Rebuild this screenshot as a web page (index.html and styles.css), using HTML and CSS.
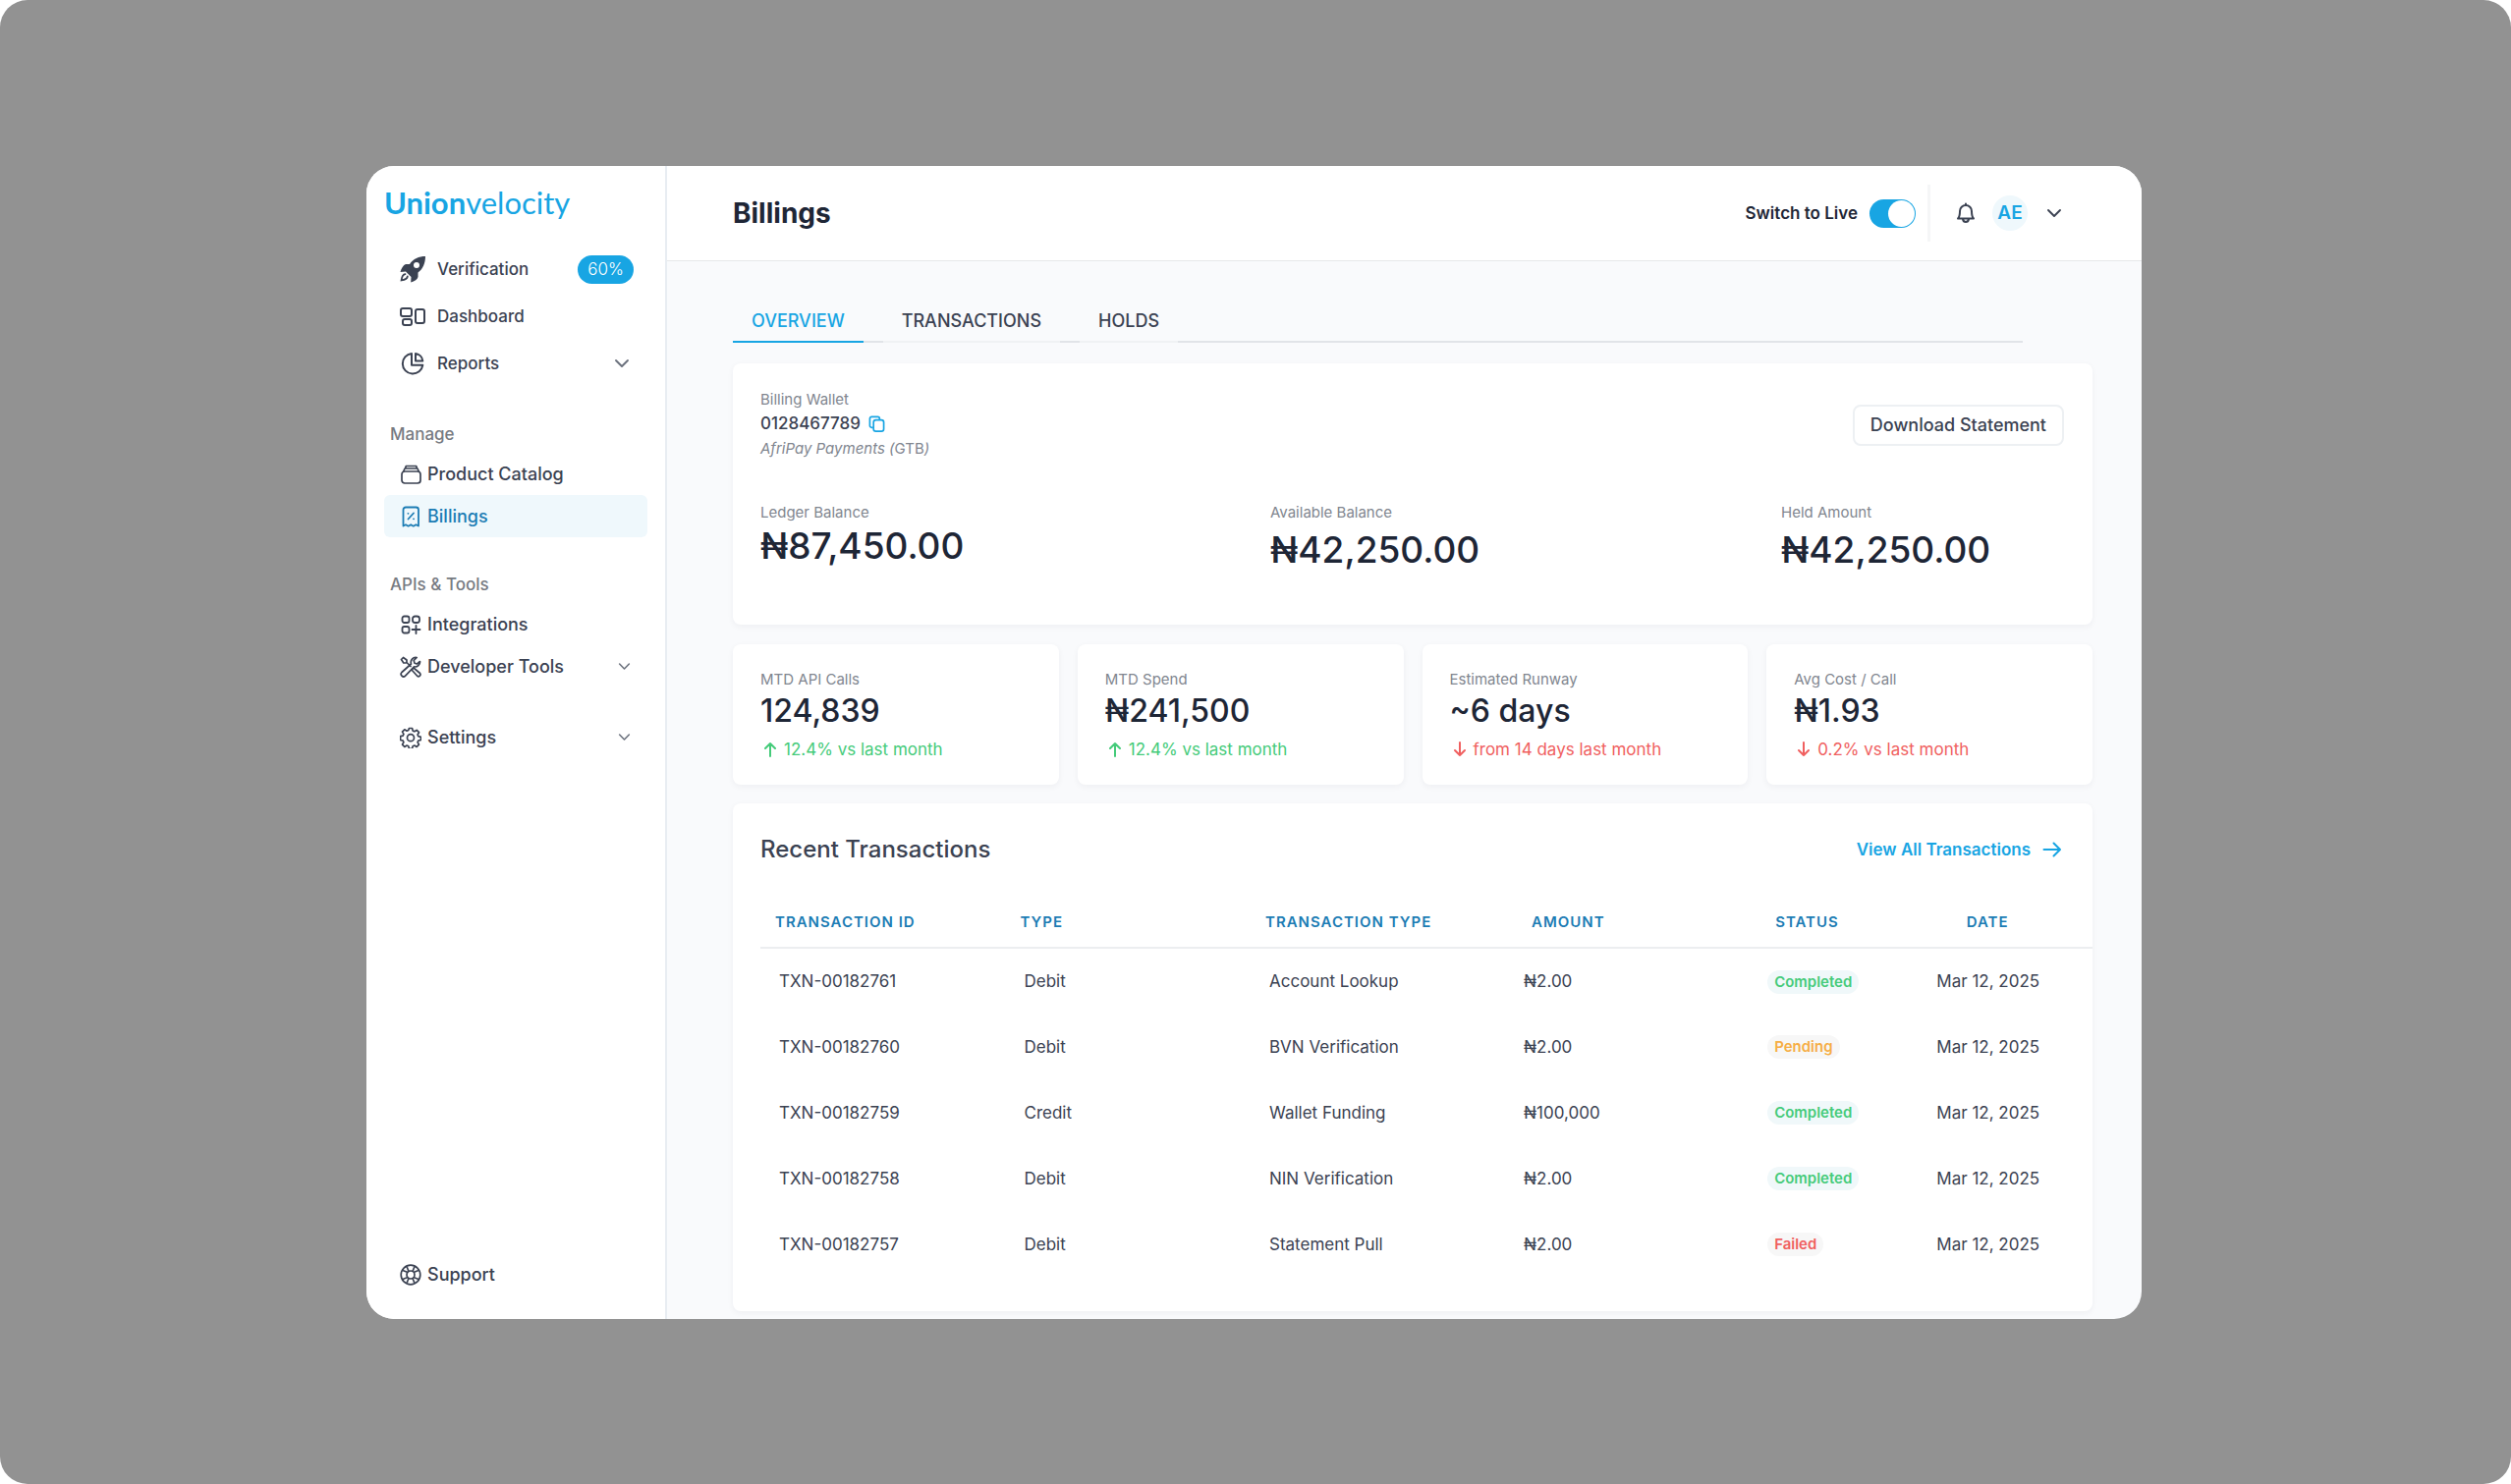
FILE: index.html
```html
<!DOCTYPE html>
<html lang="en">
<head>
<meta charset="utf-8">
<meta name="viewport" content="width=device-width, initial-scale=1">
<title>Billings - Unionvelocity</title>
<link rel="stylesheet" href="styles.css">
</head>
<body>
<svg class="sprite" aria-hidden="true">
  <symbol id="chevron" viewBox="0 0 16 16"><path d="M2 5l6 6 6-6" fill="none" stroke="currentColor" stroke-width="1.900" stroke-linecap="round" stroke-linejoin="round"/></symbol>
  <symbol id="up" viewBox="0 0 16 16"><path d="M8 15V2M3 7l5-5 5 5" fill="none" stroke="currentColor" stroke-width="2" stroke-linecap="round" stroke-linejoin="round"/></symbol>
  <symbol id="down" viewBox="0 0 16 16"><path d="M8 1v13M3 9l5 5 5-5" fill="none" stroke="currentColor" stroke-width="2" stroke-linecap="round" stroke-linejoin="round"/></symbol>
</svg>
<div class="stage">
  <div class="app">
    <aside class="sidebar">
      <a class="logo" href="#"><b>Union</b>velocity</a>
      <nav class="nav">
        <a class="link large" href="#">
          <svg class="icon" viewBox="0 0 28 28"><path fill="currentColor" d="M27 1C20.500 1 14.500 3.500 11 9H7C4.500 10 2.500 13 1.500 17l5.500-.500 5.500 5.500-.300 5.500c4-1 6.800-3 7.300-5.500v-4.500C24.500 14 27 8 27 1z"/><circle cx="18" cy="10" r="3" fill="#fff"/><path d="M6.500 19.200C3.500 19.500 3 22 2.600 25.400 6 25 8.400 24.300 8.800 21.500" fill="none" stroke="currentColor" stroke-width="1.800" stroke-linecap="round"/></svg>
          <span>Verification</span><span class="progress">60%</span>
        </a>
        <a class="link large" href="#">
          <svg class="icon" viewBox="0 0 28 28" fill="none" stroke="currentColor" stroke-width="2"><rect x="2" y="6" width="11" height="8" rx="2"/><rect x="4" y="17" width="9" height="6" rx="2"/><rect x="17" y="7" width="9" height="14" rx="2"/></svg>
          <span>Dashboard</span>
        </a>
        <a class="link large" href="#">
          <svg class="icon" viewBox="0 0 28 28" fill="none" stroke="currentColor" stroke-width="2" stroke-linejoin="round"><path d="M13 4a10.300 10.300 0 1 0 11.300 11.800H13z"/><path d="M17 4v7.500h7.300A8.500 8.500 0 0 0 17 4z"/></svg>
          <span>Reports</span><svg class="chevron wide"><use href="#chevron"/></svg>
        </a>
        <h2 class="group">Manage</h2>
        <a class="link" href="#">
          <svg class="icon" viewBox="0 0 22 22" fill="none" stroke="currentColor" stroke-width="1.700" stroke-linejoin="round"><rect x="2" y="8" width="19" height="12" rx="3"/><path d="M3.500 8.500L5 5h13l1.500 3.500M5.500 5l.800-2.500h10.400L17.500 5"/></svg>
          <span>Product Catalog</span>
        </a>
        <a class="link active" href="#" aria-current="page">
          <svg class="icon" viewBox="0 0 22 22" fill="none" stroke="currentColor" stroke-width="1.800" stroke-linejoin="round" stroke-linecap="round"><path d="M3.500 20.500V4A2.500 2.500 0 0 1 6 1.500h10.500A2.500 2.500 0 0 1 19 4v16.500l-2.600-1.300-2.600 1.500-2.600-1.500-2.600 1.500-2.600-1.500z"/><path d="M8.500 13.500l5.500-6M8.400 7.800h.1M14 13.300h.1"/></svg>
          <span>Billings</span>
        </a>
        <h2 class="group">APIs &amp; Tools</h2>
        <a class="link" href="#">
          <svg class="icon" viewBox="0 0 22 22" fill="none" stroke="currentColor" stroke-width="1.800" stroke-linecap="round"><rect x="2.500" y="2.500" width="7" height="6.500" rx="2"/><rect x="13" y="2.500" width="7" height="6.500" rx="2.500"/><rect x="2.500" y="13" width="7" height="6.500" rx="2"/><path d="M16.500 12v8M12.500 16h8"/></svg>
          <span>Integrations</span>
        </a>
        <a class="link" href="#">
          <svg class="icon" viewBox="0 0 22 22" fill="none" stroke="currentColor" stroke-width="1.700" stroke-linejoin="round" stroke-linecap="round"><path d="M1.500 3.500l2-2L7 4v2.500l4 4M6 7H3.800L1.500 3.500M12.500 13.500l1.500-1.500 6.500 5.500a2 2 0 0 1-2.800 2.800L12.500 14.500"/><path d="M20.500 5.500l-3 2.500-2.500-.800-.800-2.700 3-3a5 5 0 0 0-5.700 6.500L2 16.500a2.500 2.500 0 0 0 3.600 3.600l8.900-9.200a5 5 0 0 0 6-5.400z"/></svg>
          <span>Developer Tools</span><svg class="chevron"><use href="#chevron"/></svg>
        </a>
        <a class="link apart" href="#">
          <svg class="icon" viewBox="0 0 22 22" fill="none" stroke="currentColor" stroke-width="1.700" stroke-linejoin="round"><path d="M9.400 1.500h3.200l.600 2.600 1.700.7 2.300-1.400 2.300 2.300-1.400 2.300.7 1.700 2.600.6v3.200l-2.600.6-.7 1.700 1.400 2.300-2.300 2.300-2.300-1.400-1.700.7-.6 2.600H9.400l-.6-2.600-1.700-.7-2.300 1.400-2.300-2.300 1.400-2.300-.7-1.700-2.600-.6V9.700l2.600-.6.7-1.700-1.400-2.300 2.300-2.300 2.300 1.400 1.700-.7z"/><circle cx="11" cy="11.200" r="3.500"/></svg>
          <span>Settings</span><svg class="chevron"><use href="#chevron"/></svg>
        </a>
      </nav>
      <a class="link support" href="#">
        <svg class="icon" viewBox="0 0 22 22" fill="none" stroke="currentColor" stroke-width="1.700"><circle cx="11" cy="11" r="9.800"/><circle cx="11" cy="11" r="4"/><path d="M7 2.500l2 5M3 6.500l5 2M15 2.500l-2 5M19 6.500l-5 2M7 19.500l2-5M3 15.500l5-2M15 19.500l-2-5M19 15.500l-5-2"/></svg>
        <span>Support</span>
      </a>
    </aside>
    <div class="main">
      <header class="topbar">
        <h1>Billings</h1>
        <label class="live" for="live">Switch to Live <input class="toggle" id="live" type="checkbox" role="switch" checked></label>
        <div class="account">
          <button class="bare" type="button" aria-label="Notifications"><svg class="bell" viewBox="0 0 20 22" fill="none" stroke="currentColor" stroke-width="2" stroke-linejoin="round" stroke-linecap="round"><path d="M2 16.500h16c-1.600-1.500-2-3-2-7.500a6 6 0 0 0-12 0c0 4.500-.4 6-2 7.500zM10 1.500V3M7 17c.3 2 1.500 3 3 3s2.700-1 3-3"/></svg></button>
          <span class="avatar">AE</span>
          <button class="bare" type="button" aria-label="Account menu"><svg class="chevron wide"><use href="#chevron"/></svg></button>
        </div>
      </header>
      <main class="content">
        <nav class="tabs"><a class="tab current" href="#">OVERVIEW</a><a class="tab" href="#">TRANSACTIONS</a><a class="tab" href="#">HOLDS</a></nav>
        <section class="card wallet">
          <div class="wallet-head">
            <div>
              <p class="label">Billing Wallet</p>
              <p class="number">0128467789
                <button class="bare copy" type="button" aria-label="Copy account number"><svg viewBox="0 0 18 18" fill="none" stroke="currentColor" stroke-width="1.800"><rect x="5.500" y="5" width="11" height="12" rx="2.500"/><path d="M5 13H3.500a2 2 0 0 1-2-2V3.500a2 2 0 0 1 2-2H10a2 2 0 0 1 2 2V4.500"/></svg></button></p>
              <p class="label bank">AfriPay Payments (<span>GTB</span>)</p>
            </div>
            <button class="download" type="button">Download Statement</button>
          </div>
          <div class="balances">
            <div><p class="label">Ledger Balance</p><p class="balance first">₦87,450.00</p></div>
            <div><p class="label">Available Balance</p><p class="balance">₦42,250.00</p></div>
            <div><p class="label">Held Amount</p><p class="balance">₦42,250.00</p></div>
          </div>
        </section>
        <section class="stats">
          <div class="card stat"><p class="label">MTD API Calls</p><p class="value">124,839</p><p class="trend up"><svg><use href="#up"/></svg>12.4% vs last month</p></div>
          <div class="card stat"><p class="label">MTD Spend</p><p class="value">₦241,500</p><p class="trend up"><svg><use href="#up"/></svg>12.4% vs last month</p></div>
          <div class="card stat"><p class="label">Estimated Runway</p><p class="value">~6 days</p><p class="trend down"><svg><use href="#down"/></svg>from 14 days last month</p></div>
          <div class="card stat"><p class="label">Avg Cost / Call</p><p class="value">₦1.93</p><p class="trend down"><svg><use href="#down"/></svg>0.2% vs last month</p></div>
        </section>
        <section class="card recent">
          <div class="recent-head">
            <h2>Recent Transactions</h2>
            <a href="#">View All Transactions <svg viewBox="0 0 20 20" fill="none" stroke="currentColor" stroke-width="2" stroke-linecap="round" stroke-linejoin="round"><path d="M1.500 10h16M11.500 3.500l6.500 6.500-6.500 6.500"/></svg></a>
          </div>
          <table>
            <colgroup><col class="c-id"><col class="c-type"><col class="c-kind"><col class="c-amount"><col class="c-status"><col class="c-date"></colgroup>
            <thead><tr><th>TRANSACTION ID</th><th>TYPE</th><th>TRANSACTION TYPE</th><th class="inset">AMOUNT</th><th class="inset">STATUS</th><th class="centered">DATE</th></tr></thead>
            <tbody>
              <tr><td>TXN-00182761</td><td>Debit</td><td>Account Lookup</td><td>₦2.00</td><td><span class="pill ok">Completed</span></td><td>Mar 12, 2025</td></tr>
              <tr><td>TXN-00182760</td><td>Debit</td><td>BVN Verification</td><td>₦2.00</td><td><span class="pill wait">Pending</span></td><td>Mar 12, 2025</td></tr>
              <tr><td>TXN-00182759</td><td>Credit</td><td>Wallet Funding</td><td>₦100,000</td><td><span class="pill ok">Completed</span></td><td>Mar 12, 2025</td></tr>
              <tr><td>TXN-00182758</td><td>Debit</td><td>NIN Verification</td><td>₦2.00</td><td><span class="pill ok">Completed</span></td><td>Mar 12, 2025</td></tr>
              <tr><td>TXN-00182757</td><td>Debit</td><td>Statement Pull</td><td>₦2.00</td><td><span class="pill bad">Failed</span></td><td>Mar 12, 2025</td></tr>
            </tbody>
          </table>
        </section>
      </main>
    </div>
  </div>
</div>
</body>
</html>
```
FILE: styles.css
```css
:root {
  --blue: #18a5e3;
  --deep: #1c7cb4;
  --ink: #1e2636;
  --text: #3b4252;
  --muted: #81868f;
  --green: #45cb7a;
  --red: #f05f5f;
}
* { box-sizing: border-box; }
body { margin: 0; background: #fff; color: var(--text); font: 500 17px/24px Inter, "Noto Sans", sans-serif; }
h1, h2, p { margin: 0; font-weight: 500; }
a { color: inherit; text-decoration: none; }
button { font: inherit; color: inherit; cursor: pointer; }
.sprite { display: none; }
.bare { display: flex; padding: 0; border: 0; background: none; }

.stage { display: flex; min-height: 100vh; padding: 169px 376px 168px 373px; background: #929292; border-radius: 28px; }
.app { display: flex; flex: 1; min-width: 0; overflow: hidden; background: #f9fafc; border-radius: 28px; }

/* Sidebar */
.sidebar { display: flex; flex-direction: column; flex: none; width: 306px; padding: 0 18px 24px; background: #fff; border-right: 2px solid #e8edf2; }
.logo { height: 81px; padding-top: 17px; color: var(--blue); font: 400 31px/40px Lato, sans-serif; }
.link { display: flex; align-items: center; gap: 6px; height: 43px; padding: 0 17px 0 16px; border-radius: 6px; font-size: 18px; }
.link .icon { flex: none; width: 22px; height: 22px; }
.link.large { gap: 11px; height: 48px; padding: 0 14px 0 15px; font-size: 17px; }
.link.large .icon { width: 28px; height: 28px; }
.link.active { color: var(--deep); background: #eff8fc; }
.link.apart { margin-top: 29px; }
.support { margin-top: auto; }
.group { height: 38px; margin: 29px 0 0 6px; color: #777b82; font-size: 17px; line-height: 38px; }
.chevron { width: 13px; height: 13px; margin-left: auto; }
.chevron.wide { width: 16px; height: 16px; margin-right: 4px; }
.link .chevron { color: #6a707c; }
.progress { margin-left: auto; padding: 0 10px; border-radius: 15px; background: var(--blue); color: #fff; font-weight: 300; line-height: 29px; }

/* Top bar */
.main { flex: 1; min-width: 0; }
.topbar { display: flex; align-items: center; height: 97px; padding: 0 77px 0 67px; background: #fff; border-bottom: 1px solid #e6e8ea; }
.topbar h1 { color: var(--ink); font-size: 28px; line-height: 36px; font-weight: 700; }
.live { display: flex; align-items: center; gap: 12px; margin-left: auto; color: var(--ink); font-weight: 600; }
.toggle { appearance: none; display: flex; width: 47px; height: 29px; margin: 0; padding: 1px; border-radius: 15px; background: var(--blue); }
.toggle::before { content: ""; width: 27px; height: 27px; border-radius: 50%; background: #fff; }
.toggle:checked { justify-content: flex-end; }
.account { display: flex; align-items: center; gap: 17px; height: 58px; margin-left: 12px; padding-left: 26px; border-left: 3px solid #f5f6f7; }
.bell { width: 20px; height: 22px; }
.avatar { width: 36px; height: 36px; margin-right: 2px; border-radius: 50%; background: #eff8fc; color: var(--blue); font-size: 19px; font-weight: 600; line-height: 36px; text-align: center; }

/* Content */
.content { padding: 38px 50px 8px 67px; }
.tabs { display: flex; gap: 20px; margin-right: 71px; box-shadow: inset 0 -2px #e1e4e8; }
.tab { padding: 11px 19px 8px; border-bottom: 2px solid #f0f2f4; font-size: 18px; }
.tab.current { color: var(--blue); border-color: var(--blue); }
.card { background: #fff; border-radius: 8px; box-shadow: 0 2px 6px #1e26360d; }
.label { color: var(--muted); font-size: 15px; font-weight: 400; }
.wallet { height: 266px; margin-top: 21px; padding: 25px 29px 0 28px; }
.wallet-head { display: flex; align-items: center; justify-content: space-between; }
.number { display: flex; gap: 8px; align-items: center; }
.copy { width: 17px; color: var(--blue); }
.bank { font-style: italic; line-height: 28px; }
.bank span { font-style: normal; }
.download { height: 42px; padding: 0 16px; background: #fff; border: 2px solid #edf0f3; border-radius: 8px; font-size: 18px; }
.balances { display: grid; grid-template-columns: 519fr 520fr 288fr; margin-top: 39px; }
.balance { margin-top: 4px; color: var(--ink); font-size: 37px; line-height: 44px; }
.balance.first { margin-top: 0; }
.stats { display: grid; grid-template-columns: repeat(4, 1fr); gap: 19px; margin: 20px 0 19px; }
.stat { height: 143px; padding: 24px 28px 0; }
.value { color: var(--ink); font-size: 32px; line-height: 40px; }
.trend { display: flex; align-items: center; gap: 6px; margin-top: 7px; font-weight: 400; }
.trend svg { width: 16px; height: 16px; margin-left: 2px; }
.trend.up { color: var(--green); }
.trend.down { color: var(--red); }

/* Transactions */
.recent { padding: 31px 0 35px 28px; }
.recent-head { display: flex; align-items: center; justify-content: space-between; padding-right: 31px; }
.recent-head h2 { font-size: 24px; line-height: 32px; }
.recent-head a { display: flex; align-items: center; gap: 12px; color: var(--blue); font-weight: 600; }
.recent-head svg { width: 20px; height: 20px; }
table { width: 100%; margin-top: 33px; border-collapse: collapse; table-layout: fixed; text-align: left; }
th { height: 51px; padding: 0 0 0 15px; border-bottom: 2px solid #eceef0; color: var(--deep); font-size: 15px; font-weight: 600; letter-spacing: 1px; }
th.inset { padding-left: 27px; }
th.centered { padding: 0 36px 0 0; text-align: center; }
td { height: 67px; padding: 0 0 0 19px; font-weight: 400; }
.c-id, .c-type { width: 18.4%; }
.c-kind { width: 19.1%; }
.c-amount { width: 18.3%; }
.c-status { width: 12.7%; }
.c-date { width: 13.1%; }
.pill { display: inline-block; padding: 0 7px; border-radius: 12px; font-size: 15px; font-weight: 600; }
.ok { color: var(--green); background: #f0f8fa; }
.wait { color: #f6ae45; background: #f7f7f7; }
.bad { color: var(--red); background: #f7f7f7; }
```
